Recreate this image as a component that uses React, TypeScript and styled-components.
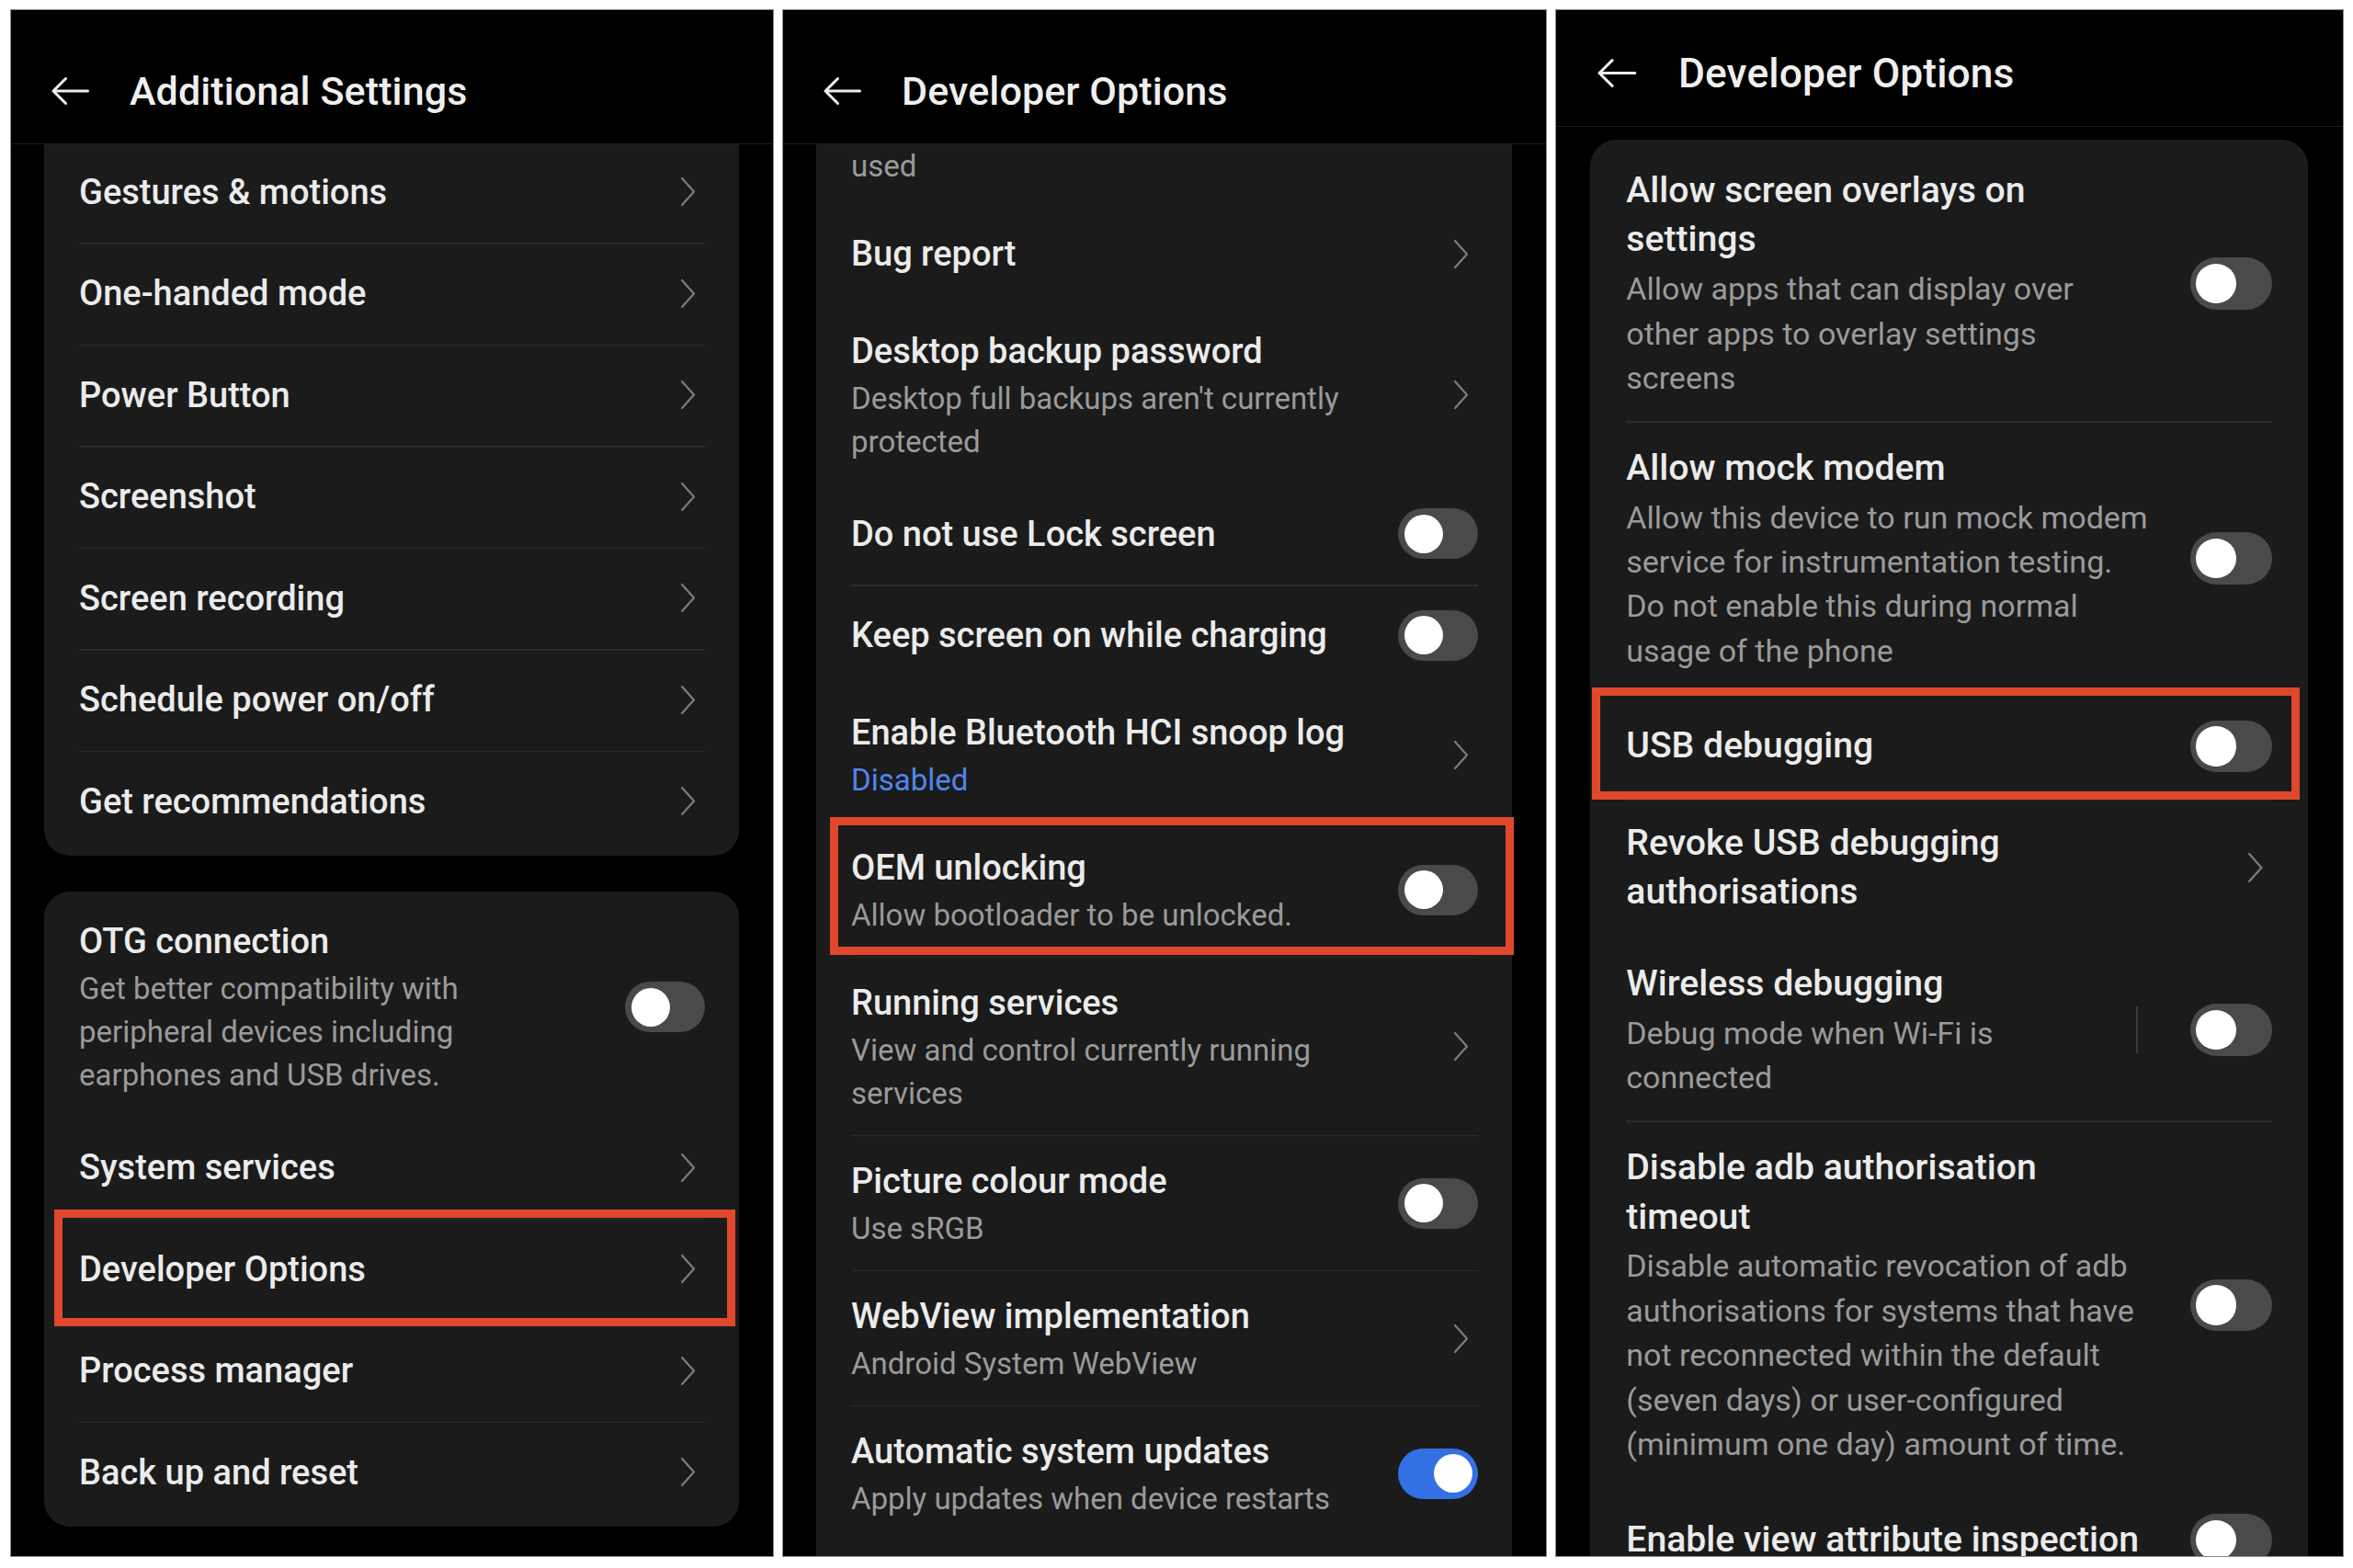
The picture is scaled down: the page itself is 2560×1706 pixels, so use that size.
import React from "react";
import styled, { createGlobalStyle } from "styled-components";

const GlobalStyle = createGlobalStyle`
  html, body {
    margin: 0;
    padding: 0;
    background: #ffffff;
  }
  body {
    font-family: Roboto, "Noto Sans", "Liberation Sans", sans-serif;
    -webkit-font-smoothing: antialiased;
  }
  * {
    box-sizing: border-box;
  }
`;

type Trail = "chevron" | "off" | "on" | "split-off";

interface Mark {
  t: number;
  r: number;
  b: number;
  l: number;
}

interface Item {
  title: string[];
  sub?: string[];
  subColor?: string;
  trail?: Trail;
  mark?: Mark;
}

interface Screen {
  title: string;
  width: number;
  height: number;
  zoom: number;
  headerHeight: number;
  headerTop: number;
  offset: number;
  // first card is scrolled under the header, so its top corners don't show
  scrolled: boolean;
  // last card runs on past the bottom of the screen
  runsOn: boolean;
  cards: Item[][];
}

const screens: Screen[] = [
  {
    title: "Additional Settings",
    width: 829,
    height: 1682,
    zoom: 1,
    headerHeight: 146,
    headerTop: 31,
    offset: -7.5,
    scrolled: true,
    runsOn: false,
    cards: [
      [
        { title: ["Gestures & motions"], trail: "chevron" },
        { title: ["One-handed mode"], trail: "chevron" },
        { title: ["Power Button"], trail: "chevron" },
        { title: ["Screenshot"], trail: "chevron" },
        { title: ["Screen recording"], trail: "chevron" },
        { title: ["Schedule power on/off"], trail: "chevron" },
        { title: ["Get recommendations"], trail: "chevron" },
      ],
      [
        {
          title: ["OTG connection"],
          sub: [
            "Get better compatibility with",
            "peripheral devices including",
            "earphones and USB drives.",
          ],
          trail: "off",
        },
        { title: ["System services"], trail: "chevron" },
        {
          title: ["Developer Options"],
          trail: "chevron",
          mark: { t: -10, r: -33, b: -6.5, l: -27 },
        },
        { title: ["Process manager"], trail: "chevron" },
        { title: ["Back up and reset"], trail: "chevron" },
      ],
    ],
  },
  {
    title: "Developer Options",
    width: 830,
    height: 1682,
    zoom: 1,
    headerHeight: 146,
    headerTop: 31,
    offset: -4,
    scrolled: true,
    runsOn: true,
    cards: [
      [
        { title: [], sub: ["used"] },
        { title: ["Bug report"], trail: "chevron" },
        {
          title: ["Desktop backup password"],
          sub: ["Desktop full backups aren't currently", "protected"],
          trail: "chevron",
        },
        { title: ["Do not use Lock screen"], trail: "off" },
        { title: ["Keep screen on while charging"], trail: "off" },
        {
          title: ["Enable Bluetooth HCI snoop log"],
          sub: ["Disabled"],
          subColor: "#4f86ec",
          trail: "chevron",
        },
        {
          title: ["OEM unlocking"],
          sub: ["Allow bootloader to be unlocked."],
          trail: "off",
          mark: { t: -4.5, r: -39, b: 2, l: -23 },
        },
        {
          title: ["Running services"],
          sub: ["View and control currently running", "services"],
          trail: "chevron",
        },
        { title: ["Picture colour mode"], sub: ["Use sRGB"], trail: "off" },
        {
          title: ["WebView implementation"],
          sub: ["Android System WebView"],
          trail: "chevron",
        },
        {
          title: ["Automatic system updates"],
          sub: ["Apply updates when device restarts"],
          trail: "on",
        },
        { title: [] },
      ],
    ],
  },
  {
    title: "Developer Options",
    width: 830,
    height: 1631.5,
    zoom: 1.031,
    headerHeight: 123,
    headerTop: 11,
    offset: 13.8,
    scrolled: false,
    runsOn: true,
    cards: [
      [
        {
          title: ["Allow screen overlays on", "settings"],
          sub: [
            "Allow apps that can display over",
            "other apps to overlay settings",
            "screens",
          ],
          trail: "off",
        },
        {
          title: ["Allow mock modem"],
          sub: [
            "Allow this device to run mock modem",
            "service for instrumentation testing.",
            "Do not enable this during normal",
            "usage of the phone",
          ],
          trail: "off",
        },
        {
          title: ["USB debugging"],
          trail: "off",
          mark: { t: -7, r: -28.7, b: -1, l: -36 },
        },
        {
          title: ["Revoke USB debugging", "authorisations"],
          trail: "chevron",
        },
        {
          title: ["Wireless debugging"],
          sub: ["Debug mode when Wi-Fi is", "connected"],
          trail: "split-off",
        },
        {
          title: ["Disable adb authorisation", "timeout"],
          sub: [
            "Disable automatic revocation of adb",
            "authorisations for systems that have",
            "not reconnected within the default",
            "(seven days) or user-configured",
            "(minimum one day) amount of time.",
          ],
          trail: "off",
        },
        { title: ["Enable view attribute inspection"], trail: "off" },
      ],
    ],
  },
];

const Lines = ({ lines }: { lines: string[] }) => (
  <>
    {lines.map((line, i) => (
      <React.Fragment key={i}>
        {i > 0 && <br />}
        {line}
      </React.Fragment>
    ))}
  </>
);

const BackArrow = () => (
  <svg width="42" height="32" viewBox="0 0 42 32" fill="none">
    <path
      d="M40.5 16H3M16.5 2.5L3 16l13.5 13.5"
      stroke="#ededed"
      strokeWidth="3"
      strokeLinecap="round"
      strokeLinejoin="round"
    />
  </svg>
);

const Chevron = () => (
  <SChevron width="17" height="33" viewBox="0 0 17 33" fill="none">
    <path
      d="M2 2l13 14.5L2 31"
      stroke="#7c7c7c"
      strokeWidth="2.2"
      strokeLinecap="round"
      strokeLinejoin="round"
    />
  </SChevron>
);

const Trailing = ({ trail }: { trail: Trail }) => {
  if (trail === "chevron") return <Chevron />;
  return (
    <STrail>
      {trail === "split-off" && <SRule />}
      <SSwitch $on={trail === "on"}>
        <SKnob />
      </SSwitch>
    </STrail>
  );
};

const SettingRow = ({ item }: { item: Item }) => {
  const hasTitle = item.title.length > 0;
  // rows without a title are the ends of rows cut by the screen edge
  const kind = hasTitle ? "full" : item.sub ? "tail" : "head";
  return (
    <SRow $sub={!!item.sub} $kind={kind}>
      <STextCol>
        {hasTitle && (
          <STitle>
            <Lines lines={item.title} />
          </STitle>
        )}
        {item.sub && (
          <SSub $color={item.subColor} $first={!hasTitle}>
            <Lines lines={item.sub} />
          </SSub>
        )}
      </STextCol>
      {item.trail && <Trailing trail={item.trail} />}
      {item.mark && (
        <SMark $t={item.mark.t} $r={item.mark.r} $b={item.mark.b} $l={item.mark.l} />
      )}
    </SRow>
  );
};

const PhoneScreen = ({ screen }: { screen: Screen }) => (
  <SPanel $w={screen.width} $h={screen.height} $zoom={screen.zoom}>
    <SHeader $h={screen.headerHeight} $top={screen.headerTop}>
      <BackArrow />
      <SHeaderTitle>{screen.title}</SHeaderTitle>
    </SHeader>
    <SBody>
      <SStack $offset={screen.offset}>
        {screen.cards.map((card, ci) => (
          <SCard
            key={ci}
            $cutTop={screen.scrolled && ci === 0}
            $cutBottom={screen.runsOn && ci === screen.cards.length - 1}
          >
            {card.map((item, ii) => (
              <SettingRow key={ii} item={item} />
            ))}
          </SCard>
        ))}
      </SStack>
    </SBody>
  </SPanel>
);

export default function App() {
  return (
    <>
      <GlobalStyle />
      <SPage>
        {screens.map((s, i) => (
          <PhoneScreen key={i} screen={s} />
        ))}
      </SPage>
    </>
  );
}

const SPage = styled.div`
  display: flex;
  align-items: flex-start;
  gap: 11px;
  height: 1706px;
  padding: 11px 11px 0 12px;
  background: #ffffff;
  overflow: hidden;
`;

const SPanel = styled.section<{ $w: number; $h: number; $zoom: number }>`
  flex-shrink: 0;
  display: flex;
  flex-direction: column;
  width: ${(p) => p.$w}px;
  height: ${(p) => p.$h}px;
  zoom: ${(p) => p.$zoom};
  background: #000000;
  box-shadow: 0 0 0 1px #8c8c8c;
  overflow: hidden;
`;

const SHeader = styled.header<{ $h: number; $top: number }>`
  flex-shrink: 0;
  display: flex;
  align-items: center;
  gap: 44px;
  height: ${(p) => p.$h}px;
  padding: ${(p) => p.$top}px 0 0 43px;
  background: #000000;
  border-bottom: 1.5px solid #1c1c1c;
`;

const SHeaderTitle = styled.h1`
  margin: 0;
  font-size: 43px;
  font-weight: 500;
  color: #efefef;
  letter-spacing: 0.1px;
`;

const SBody = styled.div`
  flex: 1;
  min-height: 0;
  overflow: hidden;
  padding: 0 37px 0 36px;
`;

const SStack = styled.div<{ $offset: number }>`
  display: flex;
  flex-direction: column;
  gap: 39px;
  margin-top: ${(p) => p.$offset}px;
`;

const SCard = styled.div<{ $cutTop: boolean; $cutBottom: boolean }>`
  background: #1b1b1b;
  border-radius: ${(p) => (p.$cutTop ? "0 0" : "28px 28px")}
    ${(p) => (p.$cutBottom ? "0 0" : "28px 28px")};
  padding: 4px 37px ${(p) => (p.$cutBottom ? "0" : "4px")} 38px;
`;

const SRow = styled.div<{ $sub: boolean; $kind: "full" | "tail" | "head" }>`
  position: relative;
  display: flex;
  align-items: center;
  gap: 24px;
  min-height: ${(p) => (p.$kind === "full" ? "110.5px" : "0")};
  padding: ${(p) =>
    p.$kind === "tail"
      ? "0 0 17px"
      : p.$kind === "head"
      ? "0 0 60px"
      : p.$sub
      ? "24px 0 22px"
      : "21px 0"};

  & + &::before {
    content: "";
    position: absolute;
    top: 0;
    left: 0;
    right: 0;
    height: 1.5px;
    background: #2b2b2b;
  }
`;

const STextCol = styled.div`
  flex: 1;
  min-width: 0;
`;

const STitle = styled.div`
  font-size: 38px;
  line-height: 52px;
  font-weight: 500;
  color: #ebebeb;
  white-space: nowrap;
`;

const SSub = styled.div<{ $color?: string; $first: boolean }>`
  margin-top: ${(p) => (p.$first ? "0" : "2px")};
  font-size: 33px;
  line-height: 47px;
  font-weight: 400;
  color: ${(p) => p.$color || "#9a9a9a"};
  white-space: nowrap;
`;

const SChevron = styled.svg`
  flex-shrink: 0;
  margin-right: 10px;
`;

const STrail = styled.div`
  flex-shrink: 0;
  display: flex;
  align-items: center;
  gap: 55px;
`;

const SRule = styled.div`
  width: 2px;
  height: 50px;
  background: #3a3a3a;
`;

const SSwitch = styled.div<{ $on: boolean }>`
  display: flex;
  align-items: center;
  justify-content: ${(p) => (p.$on ? "flex-end" : "flex-start")};
  width: 87px;
  height: 55px;
  padding: 0 6.5px;
  border-radius: 28px;
  background: ${(p) => (p.$on ? "#3270e4" : "#4a4a4a")};
`;

const SKnob = styled.div`
  width: 42px;
  height: 42px;
  border-radius: 50%;
  background: #ffffff;
`;

const SMark = styled.div<{ $t: number; $r: number; $b: number; $l: number }>`
  position: absolute;
  top: ${(p) => p.$t}px;
  right: ${(p) => p.$r}px;
  bottom: ${(p) => p.$b}px;
  left: ${(p) => p.$l}px;
  border: 9px solid #df482c;
  pointer-events: none;
  z-index: 1;
`;
